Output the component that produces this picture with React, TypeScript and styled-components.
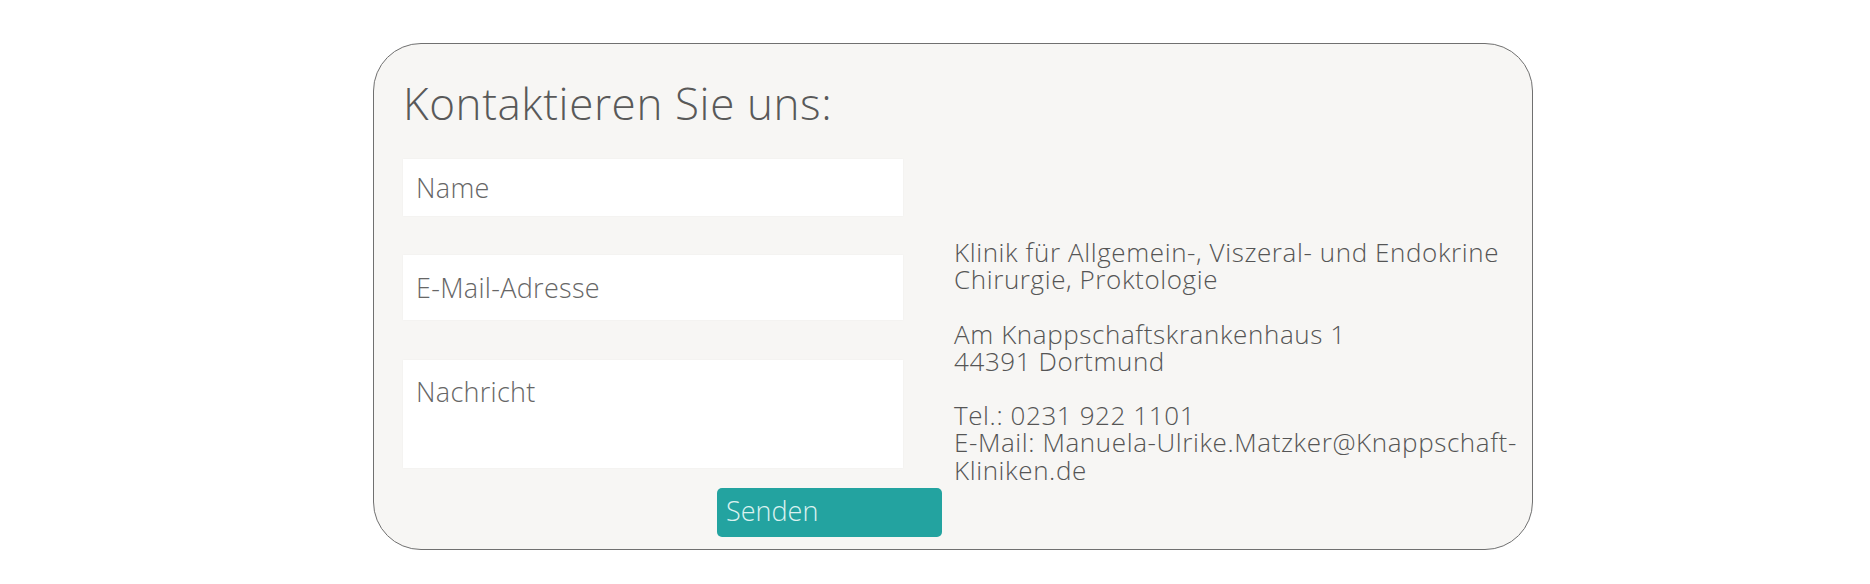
import styled, { createGlobalStyle } from "styled-components";

const Global = createGlobalStyle`
  body {
    margin: 0;
    background: #fff;
    font-family: "Open Sans", "Lato", sans-serif;
    font-weight: 300;
    color: #555;
  }
`;

const Page = styled.div`
  padding: 43px 0 0 373px;
`;

const Card = styled.section`
  box-sizing: border-box;
  width: 1160px;
  height: 507px;
  padding: 37px 0 0 29px;
  background: #f7f6f4;
  border: 1px solid #707070;
  border-radius: 48px;
`;

const Title = styled.h2`
  margin: 0;
  font-size: 44px;
  line-height: 44px;
  letter-spacing: 0.6px;
  font-weight: 300;
  color: #595959;
`;

const Body = styled.div`
  display: grid;
  grid-template-columns: 539px 1fr;
  column-gap: 12px;
  margin-top: 34px;
`;

const Form = styled.form`
  display: flex;
  flex-direction: column;
`;

const fieldBase = `
  box-sizing: border-box;
  width: 500px;
  border: none;
  outline: none;
  background: #fff;
  font-family: inherit;
  font-weight: 300;
  font-size: 27px;
  letter-spacing: 0.3px;
  color: #555;
  padding: 0 13px;
  box-shadow: 0 0 2px rgba(0, 0, 0, 0.04);
  &::placeholder { color: #666; opacity: 1; }
`;

const Field = styled.input<{ $h: number; $gap: number }>`
  ${fieldBase}
  height: ${(p) => p.$h}px;
  margin-top: ${(p) => p.$gap}px;
`;

const Message = styled.textarea`
  ${fieldBase}
  height: 108px;
  margin-top: 40px;
  padding-top: 13px;
  resize: none;
`;

const Send = styled.button`
  align-self: flex-end;
  box-sizing: border-box;
  width: 225px;
  height: 49px;
  margin-top: 20px;
  padding: 0 9px 4px;
  border: none;
  border-radius: 5px;
  background: #23a3a0;
  color: #dcf2f0;
  font-family: inherit;
  font-weight: 300;
  font-size: 27px;
  text-align: left;
`;

const Info = styled.div`
  display: flex;
  flex-direction: column;
  gap: 27px;
  padding-top: 80px;
  font-size: 26px;
  line-height: 27.3px;
  letter-spacing: 0.6px;
  color: #555;
`;

const Para = styled.p`
  margin: 0;
`;

export default function App() {
  return (
    <>
      <Global />
      <Page>
        <Card>
          <Title>Kontaktieren Sie uns:</Title>
          <Body>
            <Form onSubmit={(e) => e.preventDefault()}>
              <Field $h={57} $gap={0} placeholder="Name" />
              <Field $h={65} $gap={39} placeholder="E-Mail-Adresse" />
              <Message placeholder="Nachricht" />
              <Send type="submit">Senden</Send>
            </Form>
            <Info>
              <Para>
                Klinik für Allgemein-, Viszeral- und Endokrine
                <br />
                Chirurgie, Proktologie
              </Para>
              <Para>
                Am Knappschaftskrankenhaus 1
                <br />
                44391 Dortmund
              </Para>
              <Para>
                Tel.: 0231 922 1101
                <br />
                E-Mail: Manuela-Ulrike.Matzker@Knappschaft-
                <br />
                Kliniken.de
              </Para>
            </Info>
          </Body>
        </Card>
      </Page>
    </>
  );
}
